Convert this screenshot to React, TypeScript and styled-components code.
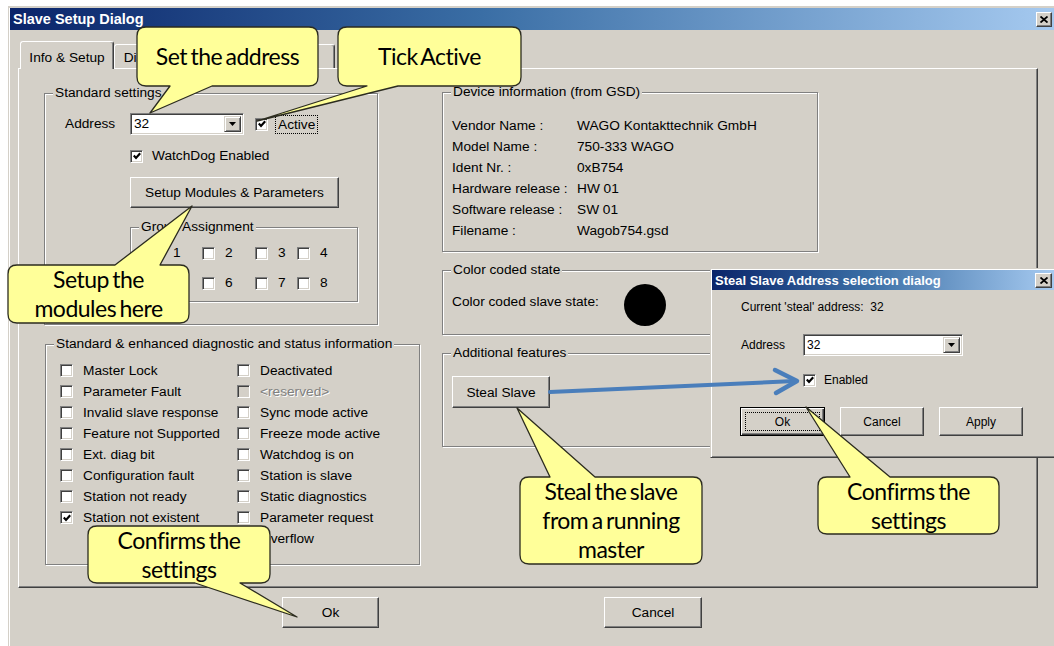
import React from "react";
import styled, { createGlobalStyle, css } from "styled-components";

const FACE = "#d4d0c8";

const GlobalStyle = createGlobalStyle`
  html, body { margin: 0; padding: 0; background: #ffffff; }
  body { overflow: hidden; font-family: "Liberation Sans", Arial, sans-serif; }
`;

const Stage = styled.div`
  position: relative;
  width: 1054px;
  height: 646px;
  overflow: hidden;
  box-sizing: border-box;
  padding: 6px 0 0 8px;
  background: #ffffff;
`;

const Window = styled.div`
  width: 1050px;
  height: 640px;
  box-sizing: border-box;
  background: ${FACE};
  border-top: 2px solid ${FACE};
  border-left: 1px solid ${FACE};
  box-shadow: inset 1px 0 #ffffff;
  padding-left: 1px;
  display: flex;
  flex-direction: column;
  font-family: "Liberation Sans", Arial, sans-serif;
  font-size: 13.7px;
  color: #000;
`;

const TitleBar = styled.div<{ $h: number; $size: number }>`
  height: ${(p) => p.$h}px;
  flex: none;
  display: flex;
  align-items: center;
  justify-content: space-between;
  background: linear-gradient(to right, #0a246a 0%, #3a6ea5 45%, #a6caf0 100%);
  color: #ffffff;
  font-weight: bold;
  font-size: ${(p) => p.$size}px;
  padding-left: 3px;
  white-space: nowrap;
`;

const CloseBtn = styled.span<{ $w: number; $h: number; $mr: number }>`
  width: ${(p) => p.$w}px;
  height: ${(p) => p.$h}px;
  margin-right: ${(p) => p.$mr}px;
  box-sizing: border-box;
  background: ${FACE};
  border: 1px solid;
  border-color: #ffffff #404040 #404040 #ffffff;
  box-shadow: inset -1px -1px #808080;
  display: flex;
  align-items: center;
  justify-content: center;
`;

const Body = styled.div`
  padding: 11px 0 0 8px;
  display: flex;
  flex-direction: column;
`;

const TabStrip = styled.div`
  display: flex;
  align-items: flex-end;
  height: 27px;
  padding-left: 2px;
  position: relative;
  z-index: 1;
`;

const Tab = styled.div<{ $active?: boolean; $w: number }>`
  box-sizing: border-box;
  width: ${(p) => p.$w}px;
  height: ${(p) => (p.$active ? 28 : 24)}px;
  margin-bottom: ${(p) => (p.$active ? -1 : 0)}px;
  border: 1px solid;
  border-bottom: none;
  border-color: #ffffff #404040 transparent #ffffff;
  box-shadow: inset -1px 0 #808080;
  border-radius: 3px 3px 0 0;
  background: ${FACE};
  display: flex;
  justify-content: center;
  align-items: flex-start;
  padding-top: ${(p) => (p.$active ? 8 : 5)}px;
  line-height: 16px;
  white-space: nowrap;
  overflow: hidden;
`;

const Panel = styled.div`
  width: 1020px;
  height: 520px;
  box-sizing: border-box;
  border: 1px solid;
  border-color: #ffffff #404040 #404040 #ffffff;
  box-shadow: inset -1px -1px #808080;
  padding: 24px 0 0 25px;
  display: grid;
  grid-template-columns: 376px 376px;
  column-gap: 22px;
  align-items: start;
`;

const Column = styled.div<{ $gap: number; $offset?: number }>`
  display: flex;
  flex-direction: column;
  gap: ${(p) => p.$gap}px;
  margin-top: ${(p) => p.$offset ?? 0}px;
`;

const Group = styled.div<{ $w: number; $h: number; $ml?: number }>`
  position: relative;
  box-sizing: border-box;
  width: ${(p) => p.$w}px;
  height: ${(p) => p.$h}px;
  margin-left: ${(p) => p.$ml ?? 0}px;
  border: 1px solid #808080;
  box-shadow: 1px 1px 0 #ffffff, inset 1px 1px 0 #ffffff;
`;

const Legend = styled.span`
  position: absolute;
  top: -9px;
  left: 8px;
  padding: 0 2px;
  background: ${FACE};
  line-height: 16px;
  white-space: nowrap;
`;

const SettingsGrid = styled.div`
  display: grid;
  grid-template-columns: 85px auto;
  align-items: center;
  padding-top: 19px;
`;

const FieldLabel = styled.span<{ $pl: number }>`
  padding-left: ${(p) => p.$pl}px;
  line-height: 16px;
`;

const InlineRow = styled.div<{ $gap: number }>`
  display: flex;
  align-items: center;
  gap: ${(p) => p.$gap}px;
`;

const Cell = styled.div<{ $mt: number }>`
  grid-column: 2;
  margin-top: ${(p) => p.$mt}px;
  display: flex;
`;

const Combo = styled.div<{ $w: number }>`
  width: ${(p) => p.$w}px;
  height: 22px;
  box-sizing: border-box;
  background: #ffffff;
  border: 1px solid;
  border-color: #808080 #ffffff #ffffff #808080;
  box-shadow: inset 1px 1px #404040, inset -1px -1px ${FACE};
  display: flex;
  padding: 2px;
`;

const ComboText = styled.span`
  flex: 1;
  line-height: 16px;
  padding-left: 1px;
`;

const ComboButton = styled.span`
  width: 17px;
  box-sizing: border-box;
  background: ${FACE};
  border: 1px solid;
  border-color: ${FACE} #404040 #404040 ${FACE};
  box-shadow: inset 1px 1px #ffffff, inset -1px -1px #808080;
  display: flex;
  align-items: center;
  justify-content: center;
`;

const Box = styled.span<{ $disabled?: boolean }>`
  width: 13px;
  height: 13px;
  flex: none;
  box-sizing: border-box;
  background: ${(p) => (p.$disabled ? FACE : "#ffffff")};
  border: 1px solid;
  border-color: #808080 #ffffff #ffffff #808080;
  box-shadow: inset 1px 1px #404040, inset -1px -1px ${FACE};
  display: flex;
  align-items: center;
  justify-content: center;
`;

const CheckItem = styled.label<{ $gap?: number }>`
  display: flex;
  align-items: center;
  gap: ${(p) => p.$gap ?? 10}px;
  line-height: 16px;
  white-space: nowrap;
`;

const CheckText = styled.span<{ $disabled?: boolean }>`
  ${(p) =>
    p.$disabled &&
    css`
      color: #808080;
      text-shadow: 1px 1px #ffffff;
    `}
`;

const FocusText = styled.span`
  border: 1px dotted #000;
  padding: 1px 2px;
  margin-left: -3px;
  line-height: 15px;
`;

const Button = styled.button<{ $w: number; $h: number }>`
  width: ${(p) => p.$w}px;
  height: ${(p) => p.$h}px;
  box-sizing: border-box;
  padding: 0;
  margin: 0;
  background: ${FACE};
  font: inherit;
  color: #000;
  border: 1px solid;
  border-color: #ffffff #404040 #404040 #ffffff;
  box-shadow: inset -1px -1px #808080;
  display: flex;
  align-items: center;
  justify-content: center;
  white-space: nowrap;
`;

const DefaultButton = styled(Button)`
  border: 1px solid #000;
  box-shadow: inset 1px 1px #ffffff, inset -1px -1px #404040, inset -2px -2px #808080;
  padding: 4px;
  align-items: stretch;
`;

const FocusInner = styled.span`
  flex: 1;
  border: 1px dotted #000;
  display: flex;
  align-items: center;
  justify-content: center;
`;

const AssignGrid = styled.div`
  display: grid;
  grid-template-columns: 52px 53px 42px auto;
  row-gap: 14px;
  padding: 17px 0 0 19px;
`;

const DiagGrid = styled.div`
  display: grid;
  grid-template-columns: 177px auto;
  grid-auto-rows: 21px;
  align-items: center;
  padding: 15px 0 0 14px;
`;

const InfoGrid = styled.div`
  display: grid;
  grid-template-columns: 125px auto;
  grid-auto-rows: 21px;
  align-items: center;
  padding: 22px 0 0 9px;
  white-space: nowrap;
`;

const StateRow = styled.div`
  display: flex;
  align-items: flex-start;
  padding: 13px 0 0 9px;
`;

const StateLabel = styled.span`
  width: 172px;
  margin-top: 10px;
  line-height: 16px;
`;

const StateLamp = styled.span`
  width: 42px;
  height: 42px;
  border-radius: 50%;
  background: #000;
`;

const FeatureRow = styled.div`
  padding: 22px 0 0 9px;
`;

const ButtonRow = styled.div`
  display: flex;
  gap: 225px;
  padding-left: 264px;
  margin-top: 9px;
`;

/* ---------- popup ---------- */

const Popup = styled.div`
  position: absolute;
  left: 710px;
  top: 268px;
  width: 346px;
  height: 190px;
  box-sizing: border-box;
  background: ${FACE};
  border: 1px solid;
  border-color: ${FACE} #404040 #404040 ${FACE};
  box-shadow: inset 1px 1px #ffffff, inset -1px -1px #808080;
  padding: 1px;
  display: flex;
  flex-direction: column;
  z-index: 3;
  font-family: "Liberation Sans", Arial, sans-serif;
  font-size: 12px;
  color: #000;
`;

const PopupBody = styled.div`
  display: flex;
  flex-direction: column;
  padding-left: 29px;
`;

const PopupInfo = styled.div`
  margin-top: 9px;
  line-height: 16px;
  white-space: pre;
`;

const PopupField = styled.div`
  margin-top: 19px;
  display: grid;
  grid-template-columns: 62px auto;
  align-items: center;
`;

const PopupCheck = styled.div`
  margin-top: 16px;
  padding-left: 62px;
  height: 16px;
  display: flex;
  align-items: center;
`;

const PopupButtons = styled.div`
  margin-top: 19px;
  margin-left: -1px;
  display: flex;
  gap: 15px;
`;

/* ---------- callouts ---------- */

const CalloutBox = styled.div<{ $x: number; $y: number; $w: number; $h: number }>`
  position: absolute;
  left: ${(p) => p.$x}px;
  top: ${(p) => p.$y}px;
  width: ${(p) => p.$w}px;
  height: ${(p) => p.$h}px;
  display: flex;
  align-items: center;
  justify-content: center;
  text-align: center;
  font-family: Lato, "Open Sans", sans-serif;
  font-size: 23px;
  line-height: 29px;
  color: #000;
  z-index: 5;
`;

const CalloutShape = styled.svg`
  position: absolute;
  left: 0;
  top: 0;
  overflow: visible;
`;

const CalloutText = styled.span`
  position: relative;
  white-space: pre-line;
  letter-spacing: -0.5px;
  word-spacing: -2px;
`;

const ArrowLayer = styled.svg`
  position: absolute;
  left: 0;
  top: 0;
  z-index: 4;
  pointer-events: none;
`;

type Tail = { edge: "top" | "bottom"; a: number; b: number; tx: number; ty: number };

function calloutPath(w: number, h: number, t: Tail, x: number, y: number) {
  const r = 9;
  const a = t.a - x;
  const b = t.b - x;
  const tx = t.tx - x;
  const ty = t.ty - y;
  if (t.edge === "bottom") {
    return `M${r},0 H${w - r} Q${w},0 ${w},${r} V${h - r} Q${w},${h} ${w - r},${h} H${b} L${tx},${ty} L${a},${h} H${r} Q0,${h} 0,${h - r} V${r} Q0,0 ${r},0 Z`;
  }
  return `M${r},0 H${a} L${tx},${ty} L${b},0 H${w - r} Q${w},0 ${w},${r} V${h - r} Q${w},${h} ${w - r},${h} H${r} Q0,${h} 0,${h - r} V${r} Q0,0 ${r},0 Z`;
}

const Callout: React.FC<{ x: number; y: number; w: number; h: number; tail: Tail; text: string }> = ({
  x,
  y,
  w,
  h,
  tail,
  text,
}) => (
  <CalloutBox $x={x} $y={y} $w={w} $h={h}>
    <CalloutShape width={w} height={h}>
      <path d={calloutPath(w, h, tail, x, y)} fill="#ffff99" stroke="#2b2b1f" strokeWidth={1.3} strokeLinejoin="round" />
    </CalloutShape>
    <CalloutText>{text}</CalloutText>
  </CalloutBox>
);

/* ---------- small drawings ---------- */

const CheckMark = () => (
  <svg width="8" height="8" viewBox="0 0 8 8">
    <path d="M0.8 3.6 L3 5.9 L7.2 1.3" fill="none" stroke="#000" strokeWidth="2.2" />
  </svg>
);

const DropArrow = () => (
  <svg width="7" height="4" viewBox="0 0 7 4">
    <polygon points="0,0 7,0 3.5,4" fill="#000" />
  </svg>
);

const CloseGlyph = () => (
  <svg width="8" height="7" viewBox="0 0 8 7">
    <path d="M0.5 0.5 L7.5 6.5 M7.5 0.5 L0.5 6.5" stroke="#000" strokeWidth="1.8" />
  </svg>
);

const Check: React.FC<{ checked?: boolean; disabled?: boolean; label?: string; gap?: number }> = ({
  checked,
  disabled,
  label,
  gap,
}) => (
  <CheckItem $gap={gap}>
    <Box $disabled={disabled}>{checked && <CheckMark />}</Box>
    {label !== undefined && <CheckText $disabled={disabled}>{label}</CheckText>}
  </CheckItem>
);

const diagRows: [string | null, string, boolean?, boolean?][] = [
  ["Master Lock", "Deactivated"],
  ["Parameter Fault", "<reserved>", false, true],
  ["Invalid slave response", "Sync mode active"],
  ["Feature not Supported", "Freeze mode active"],
  ["Ext. diag bit", "Watchdog is on"],
  ["Configuration fault", "Station is slave"],
  ["Station not ready", "Static diagnostics"],
  ["Station not existent", "Parameter request", true],
  [null, "Overflow"],
];

const deviceInfo: [string, string][] = [
  ["Vendor Name :", "WAGO Kontakttechnik GmbH"],
  ["Model Name :", "750-333 WAGO"],
  ["Ident Nr. :", "0xB754"],
  ["Hardware release :", "HW 01"],
  ["Software release :", "SW 01"],
  ["Filename :", "Wagob754.gsd"],
];

export default function App() {
  return (
    <Stage>
      <GlobalStyle />
      <Window>
        <TitleBar $h={22} $size={14.5}>
          <span>Slave Setup Dialog</span>
          <CloseBtn $w={16} $h={15} $mr={6}>
            <CloseGlyph />
          </CloseBtn>
        </TitleBar>
        <Body>
          <TabStrip>
            <Tab $active $w={94}>Info &amp; Setup</Tab>
            <Tab $w={90}>Diagnostics</Tab>
            <Tab $w={131}>Inputs / Outputs</Tab>
          </TabStrip>
          <Panel>
            <Column $gap={19}>
              <Group $w={334} $h={232}>
                <Legend>Standard settings</Legend>
                <SettingsGrid>
                  <FieldLabel $pl={20}>Address</FieldLabel>
                  <InlineRow $gap={11}>
                    <Combo $w={114}>
                      <ComboText>32</ComboText>
                      <ComboButton>
                        <DropArrow />
                      </ComboButton>
                    </Combo>
                    <CheckItem>
                      <Box>
                        <CheckMark />
                      </Box>
                      <FocusText>Active</FocusText>
                    </CheckItem>
                  </InlineRow>
                  <Cell $mt={13}>
                    <Check checked label="WatchDog Enabled" gap={9} />
                  </Cell>
                  <Cell $mt={13}>
                    <Button $w={209} $h={31}>Setup Modules &amp; Parameters</Button>
                  </Cell>
                  <Cell $mt={19}>
                    <Group $w={228} $h={75}>
                      <Legend>Group Assignment</Legend>
                      <AssignGrid>
                        {["1", "2", "3", "4", "5", "6", "7", "8"].map((n) => (
                          <Check key={n} label={n} />
                        ))}
                      </AssignGrid>
                    </Group>
                  </Cell>
                </SettingsGrid>
              </Group>
              <Group $w={375} $h={221} $ml={1}>
                <Legend>Standard &amp; enhanced diagnostic and status information</Legend>
                <DiagGrid>
                  {diagRows.map(([l, r, chk, dis], i) => (
                    <React.Fragment key={i}>
                      {l ? <Check label={l} checked={chk} /> : <span />}
                      <Check label={r} disabled={dis} />
                    </React.Fragment>
                  ))}
                </DiagGrid>
              </Group>
            </Column>
            <Column $gap={18} $offset={-1}>
              <Group $w={376} $h={160}>
                <Legend>Device information (from GSD)</Legend>
                <InfoGrid>
                  {deviceInfo.map(([k, v]) => (
                    <React.Fragment key={k}>
                      <span>{k}</span>
                      <span>{v}</span>
                    </React.Fragment>
                  ))}
                </InfoGrid>
              </Group>
              <Group $w={376} $h={65}>
                <Legend>Color coded state</Legend>
                <StateRow>
                  <StateLabel>Color coded slave state:</StateLabel>
                  <StateLamp />
                </StateRow>
              </Group>
              <Group $w={376} $h={94}>
                <Legend>Additional features</Legend>
                <FeatureRow>
                  <Button $w={98} $h={32}>Steal Slave</Button>
                </FeatureRow>
              </Group>
            </Column>
          </Panel>
          <ButtonRow>
            <Button $w={97} $h={31}>Ok</Button>
            <Button $w={98} $h={31}>Cancel</Button>
          </ButtonRow>
        </Body>
      </Window>

      <Popup>
        <TitleBar $h={20} $size={13}>
          <span>Steal Slave Address selection dialog</span>
          <CloseBtn $w={17} $h={15} $mr={2}>
            <CloseGlyph />
          </CloseBtn>
        </TitleBar>
        <PopupBody>
          <PopupInfo>{"Current 'steal' address:  32"}</PopupInfo>
          <PopupField>
            <span>Address</span>
            <Combo $w={160}>
              <ComboText>32</ComboText>
              <ComboButton>
                <DropArrow />
              </ComboButton>
            </Combo>
          </PopupField>
          <PopupCheck>
            <Check checked label="Enabled" gap={8} />
          </PopupCheck>
          <PopupButtons>
            <DefaultButton $w={85} $h={29}>
              <FocusInner>Ok</FocusInner>
            </DefaultButton>
            <Button $w={84} $h={29}>Cancel</Button>
            <Button $w={84} $h={29}>Apply</Button>
          </PopupButtons>
        </PopupBody>
      </Popup>

      <ArrowLayer width={1054} height={646}>
        <path d="M550 392 L795 381" stroke="#4a7ebb" strokeWidth={4} strokeLinecap="round" />
        <path d="M775 370 L797 381 L776 393" fill="none" stroke="#4a7ebb" strokeWidth={4.5} strokeLinecap="round" strokeLinejoin="round" />
      </ArrowLayer>

      <Callout x={137} y={27} w={181} h={59} tail={{ edge: "bottom", a: 170, b: 212, tx: 150, ty: 113 }} text="Set the address" />
      <Callout x={338} y={27} w={183} h={59} tail={{ edge: "bottom", a: 367, b: 398, tx: 257, ty: 121 }} text="Tick Active" />
      <Callout x={8} y={265} w={181} h={58} tail={{ edge: "top", a: 115, b: 160, tx: 192, ty: 206 }} text={"Setup the\nmodules here"} />
      <Callout x={520} y={477} w={182} h={87} tail={{ edge: "top", a: 550, b: 595, tx: 517, ty: 408 }} text={"Steal the slave\nfrom a running\nmaster"} />
      <Callout x={818} y={477} w={181} h={57} tail={{ edge: "top", a: 850, b: 890, tx: 806, ty: 407 }} text={"Confirms the\nsettings"} />
      <Callout x={88} y={526} w={182} h={57} tail={{ edge: "bottom", a: 195, b: 240, tx: 297, ty: 617 }} text={"Confirms the\nsettings"} />
    </Stage>
  );
}
